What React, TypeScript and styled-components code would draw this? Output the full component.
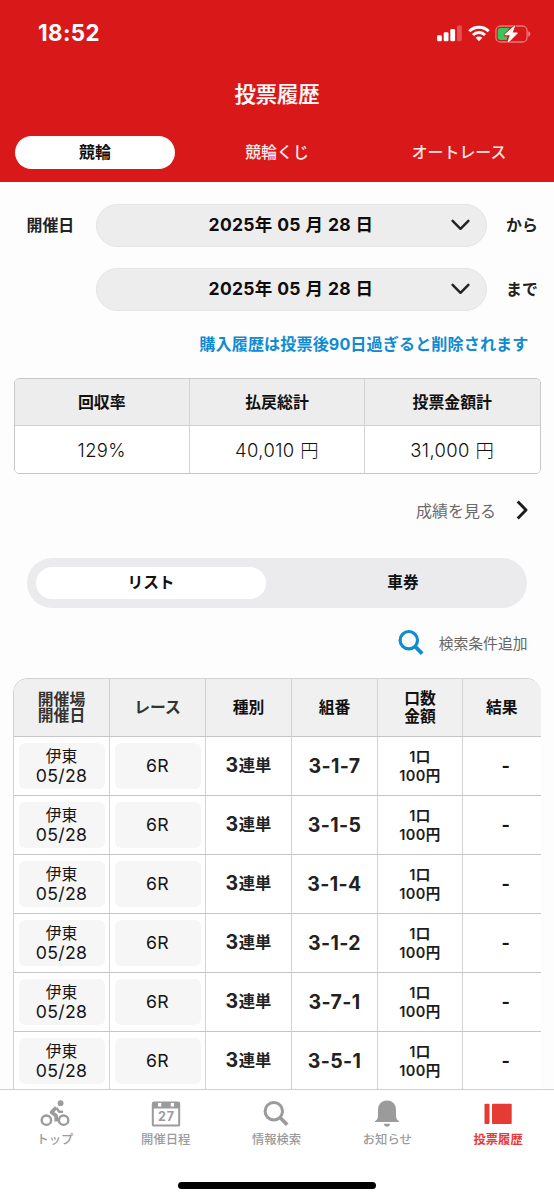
import React from "react";
import styled, { createGlobalStyle, css } from "styled-components";

const GlobalStyle = createGlobalStyle`
  * { box-sizing: border-box; }
  html, body { margin: 0; padding: 0; }
  body {
    background: #fdfdfd;
    color: #161616;
    font-family: Inter, "Noto Sans CJK JP", sans-serif;
    overflow: hidden;
  }
  svg { display: block; }
`;

const Screen = styled.div`
  width: 554px;
  height: 1200px;
  display: flex;
  flex-direction: column;
  overflow: hidden;
`;

const Header = styled.header`
  flex: none;
  height: 182px;
  background: #d81819;
  color: #fff;
`;

const StatusBar = styled.div`
  height: 67px;
  padding: 0 23px 0 38px;
  display: flex;
  align-items: center;
  justify-content: space-between;
`;

const Clock = styled.span`
  padding-bottom: 2px;
  font-size: 22.3px;
  font-weight: 700;
  letter-spacing: 0.4px;
`;

const StatusIcons = styled.div`
  display: flex;
  align-items: center;
  gap: 5.5px;
`;

const Title = styled.h1`
  margin: 0;
  height: 54px;
  line-height: 54px;
  text-align: center;
  font-size: 21.3px;
  font-weight: 500;
  -webkit-text-stroke: 0.2px currentColor;
`;

const RaceTabs = styled.nav`
  display: grid;
  grid-template-columns: repeat(3, 160px);
  gap: 22px;
  padding: 15px 15px 0;
`;

const RaceTab = styled.div<{ $active?: boolean }>`
  height: 32.5px;
  border-radius: 16.5px;
  line-height: 33px;
  text-align: center;
  font-size: 15.9px;
  font-weight: 500;
  color: #ffe9e7;
  ${(p) =>
    p.$active &&
    css`
      background: #fff;
      color: #111;
      font-weight: 700;
    `}
`;

const Content = styled.main`
  flex: none;
  height: 907px;
  overflow: hidden;
`;

const DateFilters = styled.section`
  padding: 21.5px 0 0 26.5px;
  display: flex;
  flex-direction: column;
  gap: 21.3px;
`;

const DateRow = styled.div`
  display: grid;
  grid-template-columns: 69.5px 391px 1fr;
  align-items: center;
  height: 43px;
`;

const FieldLabel = styled.span`
  padding-bottom: 2px;
  font-size: 15.9px;
  font-weight: 700;
  color: #222;
`;

const Suffix = styled(FieldLabel)`
  padding-left: 19px;
`;

const DateSelect = styled.div`
  height: 43px;
  border: 1px solid #e4e4e4;
  border-radius: 22px;
  background: #ededed;
  display: grid;
  grid-template-columns: 1fr 19px;
  align-items: center;
  padding: 0 16.5px 0 34.5px;
  text-align: center;
  color: #0d0d0d;
`;

const DateText = styled.span`
  padding-bottom: 3px;
  font-size: 17.5px;
  font-weight: 650;
  letter-spacing: 0.3px;
  word-spacing: 0.2px;
`;

const Notice = styled.p`
  margin: 21px 25.5px 0 0;
  height: 25px;
  line-height: 25px;
  text-align: right;
  font-size: 16.1px;
  letter-spacing: 0.1px;
  font-weight: 700;
  color: #0f8bd2;
`;

const Summary = styled.section`
  margin: 21px 13.5px 0;
  height: 96px;
  border: 1.5px solid #c8c8c8;
  border-radius: 5px;
  overflow: hidden;
  display: grid;
  grid-template-columns: 174.5px 175px 1fr;
`;

const SummaryColumn = styled.div`
  display: grid;
  grid-template-rows: 47px 1fr;
  text-align: center;
  & + & { border-left: 1px solid #d4d4d4; }
`;

const SummaryHead = styled.div`
  background: #ededed;
  border-bottom: 1px solid #d0d0d0;
  line-height: 48px;
  font-size: 15.9px;
  font-weight: 700;
  color: #111;
`;

const SummaryValue = styled.div`
  background: #fff;
  line-height: 49px;
  font-size: 18.4px;
  letter-spacing: 0.4px;
  font-weight: 300;
  color: #111;
`;

const ResultsLink = styled.div`
  height: 30px;
  margin: 21px 26px 0 0;
  padding-bottom: 0.5px;
  display: flex;
  align-items: center;
  justify-content: flex-end;
  gap: 20px;
  font-size: 16px;
  color: #6b6b6b;
`;

const Segments = styled.div`
  margin: 32.8px 27px 0;
  height: 50px;
  border-radius: 25px;
  background: #ebebed;
  padding: 9.5px 9px;
  display: grid;
  grid-template-columns: 230px 230px;
  justify-content: space-between;
`;

const Segment = styled.div<{ $active?: boolean }>`
  height: 32px;
  line-height: 31px;
  border-radius: 16px;
  text-align: center;
  font-size: 15.7px;
  font-weight: 700;
  color: #111;
  background: ${(p) => (p.$active ? "#fff" : "transparent")};
`;

const SearchLink = styled.div`
  height: 30px;
  margin: 20.2px 26.5px 0 0;
  display: flex;
  align-items: center;
  justify-content: flex-end;
  gap: 15px;
  font-size: 14.8px;
  color: #666;
`;

const BetTable = styled.section`
  margin: 20px 13.5px 0 13px;
  border: 1px solid #d2d2d2;
  border-right: 0;
  border-radius: 15px 15px 0 0;
  overflow: hidden;
  background: #fff;
`;

const BetRow = styled.div<{ $head?: boolean }>`
  display: grid;
  grid-template-columns: 95px 96px 86px 86px 85px 1fr;
  height: ${(p) => (p.$head ? 58 : 59)}px;
  border-bottom: 1px solid #c6c6c6;
  background: ${(p) => (p.$head ? "#f0f0f0" : "#fff")};
`;

const Cell = styled.div`
  display: flex;
  align-items: center;
  justify-content: center;
  text-align: center;
  & + & { border-left: 1px solid #d2d2d2; }
`;

const HeadCell = styled(Cell)<{ $line?: number; $soft?: boolean }>`
  padding-top: 2px;
  font-size: 15.8px;
  line-height: ${(p) => p.$line ?? 18}px;
  font-weight: 700;
  color: ${(p) => (p.$soft ? "#333" : "#111")};
`;

const Chip = styled.div`
  width: 86px;
  height: 46px;
  padding-top: 1px;
  border-radius: 6px;
  background: #f6f6f6;
  display: flex;
  flex-direction: column;
  align-items: center;
  justify-content: center;
  font-size: 17.7px;
  letter-spacing: 0.3px;
  line-height: 18.5px;
  color: #151515;
`;

const Kanji = styled.span`
  padding-top: 1px;
  font-size: 15.8px;
  letter-spacing: 0;
`;

const BetType = styled(Cell)`
  padding-bottom: 1px;
  font-size: 16.3px;
  line-height: 20px;
  font-weight: 700;
  color: #222;
`;

const Numeral = styled.span`
  font-size: 19.5px;
  letter-spacing: 0.6px;
`;

const Combination = styled(Cell)`
  font-size: 19.5px;
  letter-spacing: 0.4px;
  font-weight: 650;
  color: #222;
`;

const Amount = styled(Cell)`
  padding-top: 2px;
  font-size: 14.5px;
  letter-spacing: 0.4px;
  line-height: 18.5px;
  font-weight: 600;
  color: #1c1c1c;
`;

const Result = styled(Cell)`
  padding-left: 8px;
  font-size: 18px;
  font-weight: 700;
`;

const TabBar = styled.footer`
  flex: none;
  height: 111px;
  border-top: 1px solid #cfcfcf;
  background: #fff;
  display: grid;
  grid-template-columns: repeat(5, 1fr);
  grid-template-rows: 92px 7px;
`;

const TabItem = styled.div<{ $active?: boolean }>`
  display: flex;
  flex-direction: column;
  align-items: center;
  padding-top: 10px;
  padding-right: 1px;
  color: ${(p) => (p.$active ? "#e63a35" : "#9b9b9b")};
  font-size: 12.3px;
  font-weight: ${(p) => (p.$active ? 700 : 500)};
`;

const TabLabel = styled.span`
  margin-top: 2px;
  line-height: 20px;
`;

const HomeIndicator = styled.div`
  grid-column: 1 / -1;
  justify-self: center;
  width: 198px;
  height: 7px;
  border-radius: 4px;
  background: #000;
`;

const Signal = () => (
  <svg width="25" height="17" viewBox="0 0 25 17" fill="#fff">
    <rect x="0" y="10.3" width="4.8" height="6" rx="1.3" />
    <rect x="6.7" y="7.2" width="4.8" height="9.1" rx="1.3" />
    <rect x="13.3" y="4" width="4.8" height="12.3" rx="1.3" />
    <rect x="20" y="0.6" width="4.8" height="15.7" rx="1.3" opacity="0.25" />
  </svg>
);

const Wifi = () => (
  <svg width="22" height="17" viewBox="0 0 22 17" fill="none" stroke="#fff" strokeWidth="3">
    <path d="M1.3 6.2a13.9 13.9 0 0 1 19.4 0" />
    <path d="M5 10a8.6 8.6 0 0 1 12 0" />
    <path d="M11 16.3 7.6 12.8a4.9 4.9 0 0 1 6.8 0z" fill="#fff" stroke="none" />
  </svg>
);

const Battery = () => (
  <svg width="36" height="18" viewBox="0 0 36 18">
    <rect x="0.9" y="1" width="31.2" height="16" rx="4.6" fill="none" stroke="#fff" strokeOpacity="0.42" strokeWidth="1.3" />
    <path d="M33.4 6.3c1.3.5 1.9 1.5 1.9 2.7s-.6 2.2-1.9 2.7z" fill="#fff" opacity="0.5" />
    <path d="M5.5 3h8.8l-4 6.5-1.2 2h3.6L11.5 15h-6a2.7 2.7 0 0 1-2.7-2.7V5.7A2.7 2.7 0 0 1 5.5 3z" fill="#34c759" />
    <path
      d="M19.2.8 9.8 9.2c-.5.5-.2 1 .4 1h4.5l-2 6.4c-.3 1 .5 1.3 1.1.7l8.7-8.7c.5-.5.2-1-.4-1h-4.4l2.2-6.1c.3-.9-.1-1.2-.7-.7z"
      fill="#fff"
      stroke="#d81819"
      strokeWidth="1.4"
      paintOrder="stroke"
    />
  </svg>
);

const ChevronDown = () => (
  <svg width="19" height="12" viewBox="0 0 19 12" fill="none" stroke="#222" strokeWidth="2.4" strokeLinecap="round" strokeLinejoin="round">
    <path d="M1.6 1.8 9.5 9.8l7.9-8" />
  </svg>
);

const ChevronRight = () => (
  <svg width="12" height="20" viewBox="0 0 12 20" fill="none" stroke="#1c1c1c" strokeWidth="2.9" strokeLinejoin="round">
    <path d="M1.7 1.4 10 10l-8.3 8.6" />
  </svg>
);

const SearchIcon = ({ color, width = 3.2 }: { color: string; width?: number }) => (
  <svg width="26" height="28" viewBox="0 -1 26 28" fill="none" stroke={color} strokeWidth={width}>
    <circle cx="10.8" cy="10.2" r="8.7" />
    <path d="M16.7 16.2 24.2 23.7" strokeWidth={width + 0.7} />
  </svg>
);

const CyclistIcon = () => (
  <svg width="30" height="28" viewBox="0 0 30 28" fill="none" stroke="currentColor" strokeWidth="2.4">
    <circle cx="6.4" cy="20.2" r="4.7" />
    <circle cx="23.6" cy="20.2" r="4.7" />
    <circle cx="20.6" cy="3.2" r="2.9" fill="currentColor" stroke="none" />
    <path d="M16.2 7.5 11.5 12.2l4.7 3.5v5.7" strokeWidth="3.6" strokeLinejoin="round" />
    <path d="m16.5 7.8 2.6 3.9h4" strokeWidth="2.4" strokeLinejoin="round" />
  </svg>
);

const CalendarIcon = () => (
  <svg width="30" height="28" viewBox="0 0 30 28">
    <path
      fillRule="evenodd"
      d="M3 1.5h24a2.2 2.2 0 0 1 2.2 2.2v20.7a2.2 2.2 0 0 1-2.2 2.2H3a2.2 2.2 0 0 1-2.2-2.2V3.7A2.2 2.2 0 0 1 3 1.5zM2.8 8.6v16h24.4v-16zM7 3v3.5h3.3V3zM19.7 3v3.5H23V3z"
      fill="currentColor"
    />
    <text x="15.4" y="20.9" textAnchor="middle" fontFamily="Inter" fontWeight="700" fontSize="12.5" letterSpacing="0.8" fill="currentColor">
      27
    </text>
  </svg>
);

const BellIcon = () => (
  <svg width="28" height="28" viewBox="0 0 28 28" fill="currentColor">
    <path d="M14 .4c6 0 9 4.3 9 9.6v6c0 2.4.8 3.5 2.7 4.9.6.5.4 1-.4 1H2.7c-.8 0-1-.5-.4-1C4.2 19.500 5 18.400 5 16v-6C5 4.700 8 .4 14 .4z" />
    <path d="M10.8 23.7h6.4c-.4 2-1.6 3-3.2 3s-2.800-1-3.200-3z" />
  </svg>
);

const TicketIcon = () => (
  <svg width="28" height="28" viewBox="0 0 28 28" fill="currentColor">
    <rect x="0.5" y="3.7" width="5" height="20.3" rx="0.9" />
    <rect x="8" y="3.7" width="19.7" height="20.3" rx="0.9" />
  </svg>
);

const combinations = ["3-1-7", "3-1-5", "3-1-4", "3-1-2", "3-7-1", "3-5-1"];

const summary = [
  ["回収率", "129%"],
  ["払戻総計", "40,010 円"],
  ["投票金額計", "31,000 円"],
];

const DateField = () => (
  <DateSelect>
    <DateText>2025年 05 月 28 日</DateText>
    <ChevronDown />
  </DateSelect>
);

export default function App() {
  return (
    <Screen>
      <GlobalStyle />
      <Header>
        <StatusBar>
          <Clock>18:52</Clock>
          <StatusIcons>
            <Signal />
            <Wifi />
            <Battery />
          </StatusIcons>
        </StatusBar>
        <Title>投票履歴</Title>
        <RaceTabs>
          <RaceTab $active>競輪</RaceTab>
          <RaceTab>競輪くじ</RaceTab>
          <RaceTab>オートレース</RaceTab>
        </RaceTabs>
      </Header>

      <Content>
        <DateFilters>
          <DateRow>
            <FieldLabel>開催日</FieldLabel>
            <DateField />
            <Suffix>から</Suffix>
          </DateRow>
          <DateRow>
            <span />
            <DateField />
            <Suffix>まで</Suffix>
          </DateRow>
        </DateFilters>
        <Notice>購入履歴は投票後90日過ぎると削除されます</Notice>

        <Summary>
          {summary.map(([label, value]) => (
            <SummaryColumn key={label}>
              <SummaryHead>{label}</SummaryHead>
              <SummaryValue>{value}</SummaryValue>
            </SummaryColumn>
          ))}
        </Summary>
        <ResultsLink>
          成績を見る
          <ChevronRight />
        </ResultsLink>

        <Segments>
          <Segment $active>リスト</Segment>
          <Segment>車券</Segment>
        </Segments>
        <SearchLink>
          <SearchIcon color="#0f8bd2" />
          検索条件追加
        </SearchLink>

        <BetTable>
          <BetRow $head>
            <HeadCell $soft $line={16}>開催場<br />開催日</HeadCell>
            <HeadCell $soft>レース</HeadCell>
            <HeadCell>種別</HeadCell>
            <HeadCell>組番</HeadCell>
            <HeadCell $line={18.5}>口数<br />金額</HeadCell>
            <HeadCell>結果</HeadCell>
          </BetRow>
          {combinations.map((combo) => (
            <BetRow key={combo}>
              <Cell>
                <Chip>
                  <Kanji>伊東</Kanji>
                  <span>05/28</span>
                </Chip>
              </Cell>
              <Cell>
                <Chip>6R</Chip>
              </Cell>
              <BetType>
                <Numeral>3</Numeral>連単
              </BetType>
              <Combination>{combo}</Combination>
              <Amount>1口<br />100円</Amount>
              <Result>-</Result>
            </BetRow>
          ))}
        </BetTable>
      </Content>

      <TabBar>
        <TabItem>
          <CyclistIcon />
          <TabLabel>トップ</TabLabel>
        </TabItem>
        <TabItem>
          <CalendarIcon />
          <TabLabel>開催日程</TabLabel>
        </TabItem>
        <TabItem>
          <SearchIcon color="#9b9b9b" width={3} />
          <TabLabel>情報検索</TabLabel>
        </TabItem>
        <TabItem>
          <BellIcon />
          <TabLabel>お知らせ</TabLabel>
        </TabItem>
        <TabItem $active>
          <TicketIcon />
          <TabLabel>投票履歴</TabLabel>
        </TabItem>
        <HomeIndicator />
      </TabBar>
    </Screen>
  );
}
